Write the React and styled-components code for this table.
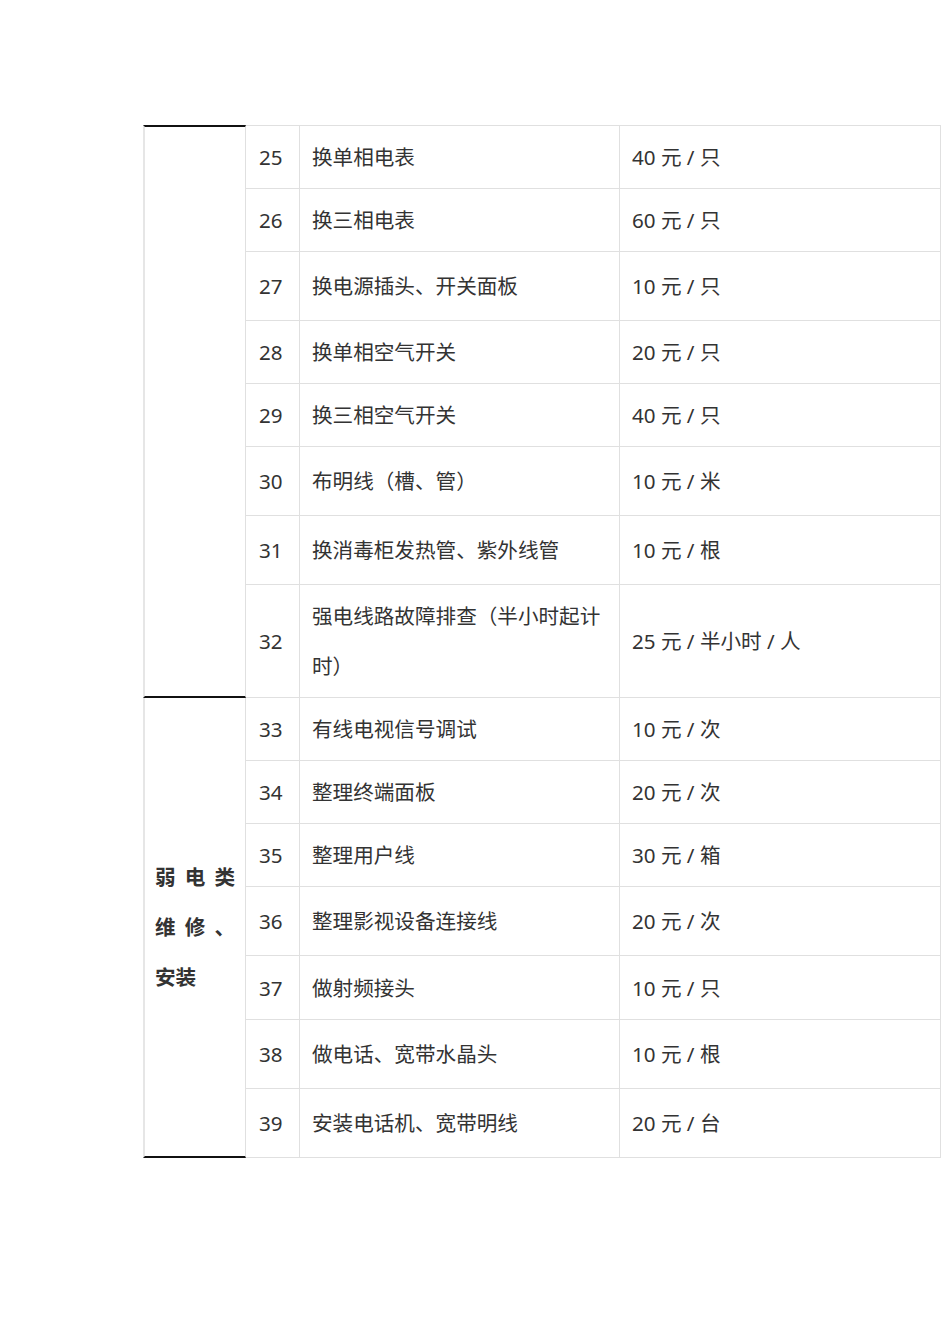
import React from "react";
import styled, { createGlobalStyle } from "styled-components";

const Global = createGlobalStyle`
  html, body { margin: 0; padding: 0; background: #fff; }
  body { font-family: "Noto Sans", "Noto Sans CJK SC", sans-serif; color: #333; }
`;

const Page = styled.div`
  padding: 125px 0 0 143px;
  min-height: 1344px;
  box-sizing: border-box;
`;

const Table = styled.table`
  border-collapse: separate;
  border-spacing: 0;
  width: 798px;
  table-layout: fixed;
  font-size: 20.6px;
  line-height: 50px;
  color: #333;
`;

const Col = styled.col`
  width: ${(p) => p.$w}px;
`;

const Row = styled.tr`
  height: ${(p) => p.$h}px;
`;

const Cell = styled.td`
  box-sizing: border-box;
  border-right: 1px solid #e0e0e0;
  border-bottom: 1px solid #e0e0e0;
  border-top: ${(p) => (p.$first ? "1px solid #e0e0e0" : "none")};
  padding: 0 12px;
  vertical-align: middle;
  word-break: break-all;
`;

const NumCell = styled(Cell)`
  padding: 0 0 0 13px;
`;

const CatCell = styled.td`
  box-sizing: border-box;
  border-left: 2px solid #e6e6e6;
  border-right: 1px solid #e0e0e0;
  border-top: ${(p) => (p.$first ? "2px solid #111" : "none")};
  border-bottom: 2px solid #111;
  padding: 0 10px 0 10px;
  vertical-align: middle;
  font-weight: 700;
  text-align: justify;
  line-height: 50px;
  color: #333;
`;

const rows1 = [
  ["25", "换单相电表", "40 元 / 只", 64],
  ["26", "换三相电表", "60 元 / 只", 63],
  ["27", "换电源插头、开关面板", "10 元 / 只", 69],
  ["28", "换单相空气开关", "20 元 / 只", 63],
  ["29", "换三相空气开关", "40 元 / 只", 63],
  ["30", "布明线（槽、管）", "10 元 / 米", 69],
  ["31", "换消毒柜发热管、紫外线管", "10 元 / 根", 69],
  ["32", "强电线路故障排查（半小时起计时）", "25 元 / 半小时 / 人", 113],
];

const rows2 = [
  ["33", "有线电视信号调试", "10 元 / 次", 63],
  ["34", "整理终端面板", "20 元 / 次", 63],
  ["35", "整理用户线", "30 元 / 箱", 63],
  ["36", "整理影视设备连接线", "20 元 / 次", 69],
  ["37", "做射频接头", "10 元 / 只", 64],
  ["38", "做电话、宽带水晶头", "10 元 / 根", 69],
  ["39", "安装电话机、宽带明线", "20 元 / 台", 69],
];

function Group({ rows, title, first }) {
  return rows.map(([n, d, p, h], i) => (
    <Row key={n} $h={h}>
      {i === 0 && (
        <CatCell rowSpan={rows.length} $first={first}>
          {title}
        </CatCell>
      )}
      <NumCell $first={first && i === 0}>{n}</NumCell>
      <Cell $first={first && i === 0}>{d}</Cell>
      <Cell $first={first && i === 0}>{p}</Cell>
    </Row>
  ));
}

export default function App() {
  return (
    <>
      <Global />
      <Page>
        <Table>
          <colgroup>
            <Col $w={103} />
            <Col $w={54} />
            <Col $w={320} />
            <Col $w={321} />
          </colgroup>
          <tbody>
            <Group rows={rows1} title="" first />
            <Group rows={rows2} title="弱电类维修、安装" />
          </tbody>
        </Table>
      </Page>
    </>
  );
}
